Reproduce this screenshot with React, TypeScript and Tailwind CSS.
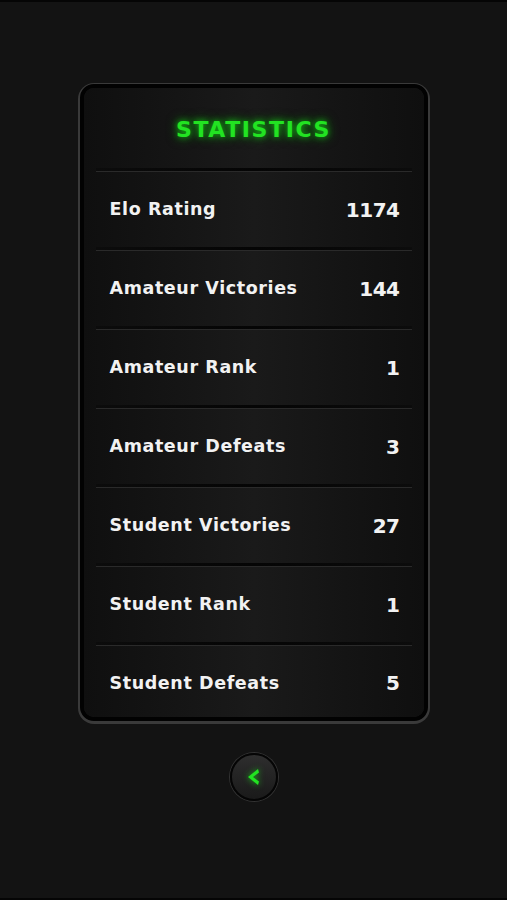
import React from 'react';

const stats = [
  { label: 'Elo Rating', value: '1174' },
  { label: 'Amateur Victories', value: '144' },
  { label: 'Amateur Rank', value: '1' },
  { label: 'Amateur Defeats', value: '3' },
  { label: 'Student Victories', value: '27' },
  { label: 'Student Rank', value: '1' },
  { label: 'Student Defeats', value: '5' },
];

function StatRow({ label, value, last }: { label: string; value: string; last?: boolean }) {
  return (
    <div className="flex flex-col">
      <div className="mx-3 h-[3px] bg-gradient-to-r from-[#0c0c0c] via-[#050505] to-[#0c0c0c] shadow-[0_1px_0_#2a2a2a]" />
      <div
        className={
          'flex items-center justify-between pl-[26px] pr-[24px] ' +
          (last ? 'h-[72px] pt-[4px]' : 'h-[76px] pt-[1px]')
        }
      >
        <span className="text-[17.5px] font-bold tracking-[0.6px] text-[#f2f2f2]">{label}</span>
        <span className="text-[20px] font-bold tracking-[-0.5px] text-[#f2f2f2]">{value}</span>
      </div>
    </div>
  );
}

export default function App() {
  return (
    <div
      className="flex h-[900px] w-full flex-col items-center border-y-2 border-[#050505] bg-[#131313]"
      style={{ fontFamily: '"DejaVu Sans", Verdana, sans-serif' }}
    >
      <div className="mt-[82px] w-[348px] rounded-[14px] border-[4px] border-[#020202] bg-[#181818] shadow-[0_1px_0_2px_#3a3a3a]">
        <div className="overflow-hidden rounded-[10px] bg-gradient-to-r from-[#0f0f0f] via-[#1a1a1a] to-[#0f0f0f]">
          <div className="flex h-[80px] items-center justify-center pt-[2px]">
            <h1 className="text-[22px] font-bold tracking-[1.6px] text-[#22e322] [text-shadow:0_0_6px_#14b814,0_0_12px_#0f7a0f]">
              STATISTICS
            </h1>
          </div>
          {stats.map((s, i) => (
            <StatRow key={s.label} label={s.label} value={s.value} last={i === stats.length - 1} />
          ))}
        </div>
      </div>

      <button className="mt-[32px] flex h-[48px] w-[48px] items-center justify-center rounded-full border-2 border-[#050505] bg-gradient-to-b from-[#2e2e2e] to-[#1a1a1a] shadow-[0_0_0_1px_#333]">
        <svg width="20" height="22" viewBox="0 0 20 22" className="drop-shadow-[0_0_3px_#18c018]">
          <path d="M14 3 L4 11 L14 19 L15 15.5 L9 11 L15 6.5 Z" fill="#22e322" strokeLinejoin="round" />
        </svg>
      </button>
    </div>
  );
}
